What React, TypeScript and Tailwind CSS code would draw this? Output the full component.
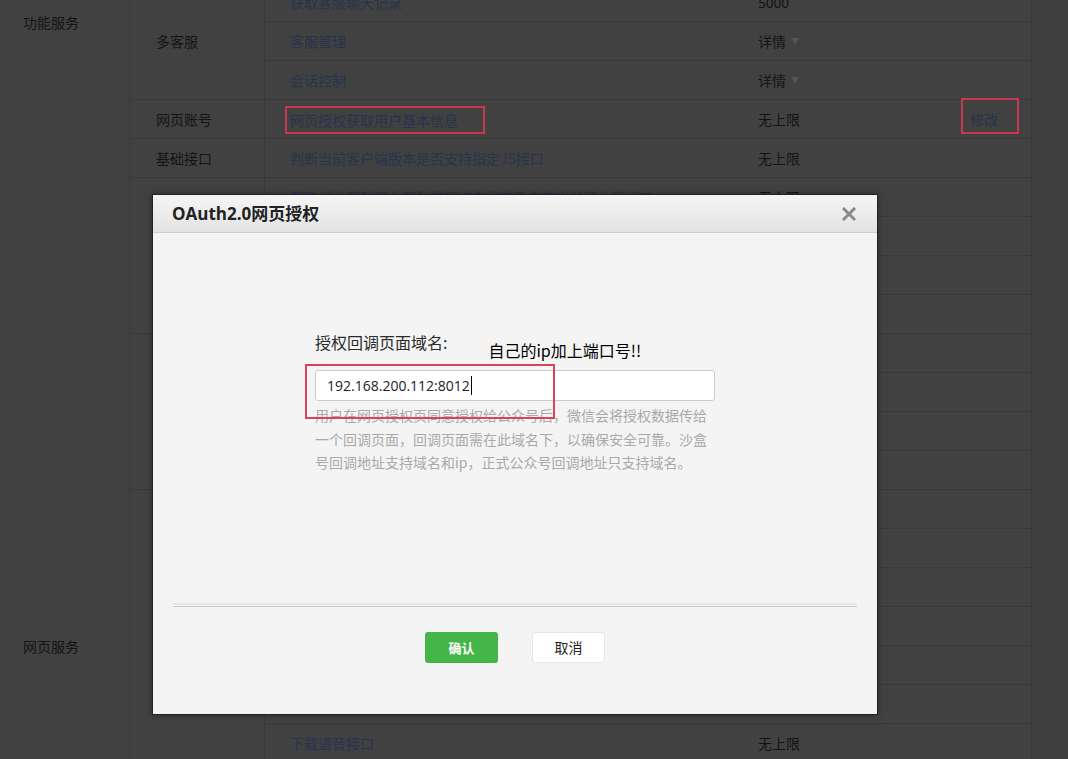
import React from "react";

type Row = { t: string; v?: string; chev?: boolean; boxed?: boolean; edit?: boolean };
type Sub = { label: string; rows: Row[] };
type Group = { label: string; subs: Sub[] };

const UL = "无上限";

const groups: Group[] = [
  {
    label: "功能服务",
    subs: [
      { label: "", rows: [{ t: "添加客服账号", v: UL }] },
      {
        label: "多客服",
        rows: [
          { t: "获取客服聊天记录", v: "5000" },
          { t: "客服管理", v: "详情", chev: true },
          { t: "会话控制", v: "详情", chev: true },
        ],
      },
    ],
  },
  {
    label: "网页服务",
    subs: [
      { label: "网页账号", rows: [{ t: "网页授权获取用户基本信息", v: UL, boxed: true, edit: true }] },
      { label: "基础接口", rows: [{ t: "判断当前客户端版本是否支持指定JS接口", v: UL }] },
      {
        label: "分享接口",
        rows: [
          { t: "获取“分享到朋友圈”按钮点击状态及自定义分享内容接口", v: UL },
          { t: "获取“分享给朋友”按钮点击状态及自定义分享内容接口", v: UL },
          { t: "获取“分享到QQ”按钮点击状态及自定义分享内容接口", v: UL },
          { t: "获取“分享到腾讯微博”按钮点击状态及自定义分享内容接口", v: UL },
        ],
      },
      {
        label: "图像接口",
        rows: [
          { t: "拍照或从手机相册中选图接口", v: UL },
          { t: "预览图片接口", v: UL },
          { t: "上传图片接口", v: UL },
          { t: "下载图片接口", v: UL },
        ],
      },
      {
        label: "音频接口",
        rows: [
          { t: "开始录音接口", v: UL },
          { t: "停止录音接口", v: UL },
          { t: "播放语音接口", v: UL },
          { t: "暂停播放接口", v: UL },
          { t: "停止播放接口", v: UL },
          { t: "上传语音接口", v: UL },
          { t: "下载语音接口", v: UL },
        ],
      },
      { label: "智能接口", rows: [{ t: "识别音频并返回识别结果接口", v: UL }] },
      { label: "设备信息", rows: [{ t: "获取网络状态接口", v: UL }] },
      {
        label: "地理位置",
        rows: [
          { t: "使用微信内置地图查看位置接口", v: UL },
          { t: "获取地理位置接口", v: UL },
        ],
      },
      {
        label: "界面操作",
        rows: [
          { t: "隐藏右上角菜单接口", v: UL },
          { t: "显示右上角菜单接口", v: UL },
          { t: "关闭当前网页窗口接口", v: UL },
          { t: "批量隐藏功能按钮接口", v: UL },
          { t: "批量显示功能按钮接口", v: UL },
          { t: "隐藏所有非基础按钮接口", v: UL },
          { t: "显示所有功能按钮接口", v: UL },
        ],
      },
    ],
  },
];

function TableRow({ r }: { r: Row }) {
  return (
    <div className="flex h-[39px] items-center border-b border-[#393939]">
      <div className="w-[468px] shrink-0 whitespace-nowrap">
        {r.boxed ? (
          <span className="ml-[20px] mt-[2px] inline-flex h-[28px] w-[200px] items-center border-2 border-[#c8384f] pl-[3px] text-[#28344d]">
            {r.t}
          </span>
        ) : (
          <span className="pl-[25px] text-[#28344d]">{r.t}</span>
        )}
      </div>
      <div className="flex w-[207px] shrink-0 items-center pl-[25px] text-[#141414]">
        <span>{r.v}</span>
        {r.chev && <span className="ml-[5px] text-[8px] text-[#555]">▼</span>}
      </div>
      <div className="flex flex-1 items-center">
        {r.edit && (
          <span className="mb-[6px] ml-[21px] inline-flex h-[36px] w-[58px] items-center border-2 border-[#c8384f] pl-[7px] pt-[6px] text-[#28344d]">
            修改
          </span>
        )}
      </div>
    </div>
  );
}

function Background() {
  return (
    <div className="-mt-[56px] w-[1032px] border-r border-[#393939] bg-[#414141] text-[14px]">
      {groups.map((g, gi) => (
        <div key={gi} className="flex">
          <div className="flex w-[130px] shrink-0 items-center border-r border-[#3a3a3a] pl-[23px] text-[#141414]">
            {g.label}
          </div>
          <div className="flex-1">
            {g.subs.map((s, si) => (
              <div key={si} className="flex">
                <div className="flex w-[135px] shrink-0 items-center border-r border-b border-[#393939] pl-[26px] text-[#141414]">
                  {s.label}
                </div>
                <div className="flex-1">
                  {s.rows.map((r, ri) => (
                    <TableRow key={ri} r={r} />
                  ))}
                </div>
              </div>
            ))}
          </div>
        </div>
      ))}
    </div>
  );
}

function Modal() {
  return (
    <div className="absolute left-[152px] top-[194px] flex h-[521px] w-[726px] flex-col border border-[#222] bg-[#f4f4f4] shadow-[0_0_6px_rgba(0,0,0,0.35)]">
      <div className="flex h-[38px] shrink-0 items-center justify-between border-b border-[#cdcdcd] bg-gradient-to-b from-[#f5f5f5] to-[#e3e3e3] pl-[19px] pr-[21px]">
        <span className="font-['Open_Sans','Noto_Sans_CJK_SC',sans-serif] text-[17px] font-bold text-[#222]">
          OAuth2.0网页授权
        </span>
        <svg width="14" height="14" viewBox="0 0 14 14">
          <path d="M2 2 L12 12 M12 2 L2 12" stroke="#8a8a8a" strokeWidth="3" strokeLinecap="square" />
        </svg>
      </div>
      <div className="h-[370px] shrink-0 pt-[98px]">
        <div className="mx-auto w-[400px]">
          <div className="flex h-[22px] items-start">
            <span className="text-[16px] leading-[22px] text-[#2a2a2a]">授权回调页面域名:</span>
            <span className="ml-[41px] mt-[8px] text-[16px] leading-[22px] text-black">自己的ip加上端口号!!</span>
          </div>
          <div className="relative mt-[17px]">
            <div className="flex h-[31px] items-center rounded-[3px] border border-[#cccccc] bg-white pl-[11px] font-['Open_Sans',sans-serif] text-[14px] text-[#222]">
              <span>192.168.200.112:8012</span>
              <span className="ml-[1px] inline-block h-[19px] w-[1px] bg-black" />
            </div>
            <p className="mt-[3px] text-[14px] leading-[23.5px] text-[#a9a9a9]">
              用户在网页授权页同意授权给公众号后，微信会将授权数据传给一个回调页面，回调页面需在此域名下，以确保安全可靠。沙盒号回调地址支持域名和ip，正式公众号回调地址只支持域名。
            </p>
            <div className="absolute left-[-10px] top-[-6px] h-[55px] w-[250px] border-2 border-[#d9435c]" />
          </div>
        </div>
      </div>
      <div className="mx-[20px] h-[4px] shrink-0 border-t-2 border-b border-t-[#e6e6e6] border-b-[#cbcbcb]" />
      <div className="flex justify-center gap-[34px] pt-[25px]">
        <button className="h-[31px] w-[73px] rounded-[3px] bg-[#44b549] text-[13px] font-bold text-white">确认</button>
        <button className="h-[31px] w-[73px] rounded-[3px] border border-[#e6e6e6] bg-white text-[14px] text-[#222]">取消</button>
      </div>
    </div>
  );
}

export default function App() {
  return (
    <div className="relative h-[759px] w-full overflow-hidden bg-[#3f3f3f] font-['Noto_Sans_CJK_SC',sans-serif]">
      <Background />
      <Modal />
    </div>
  );
}
